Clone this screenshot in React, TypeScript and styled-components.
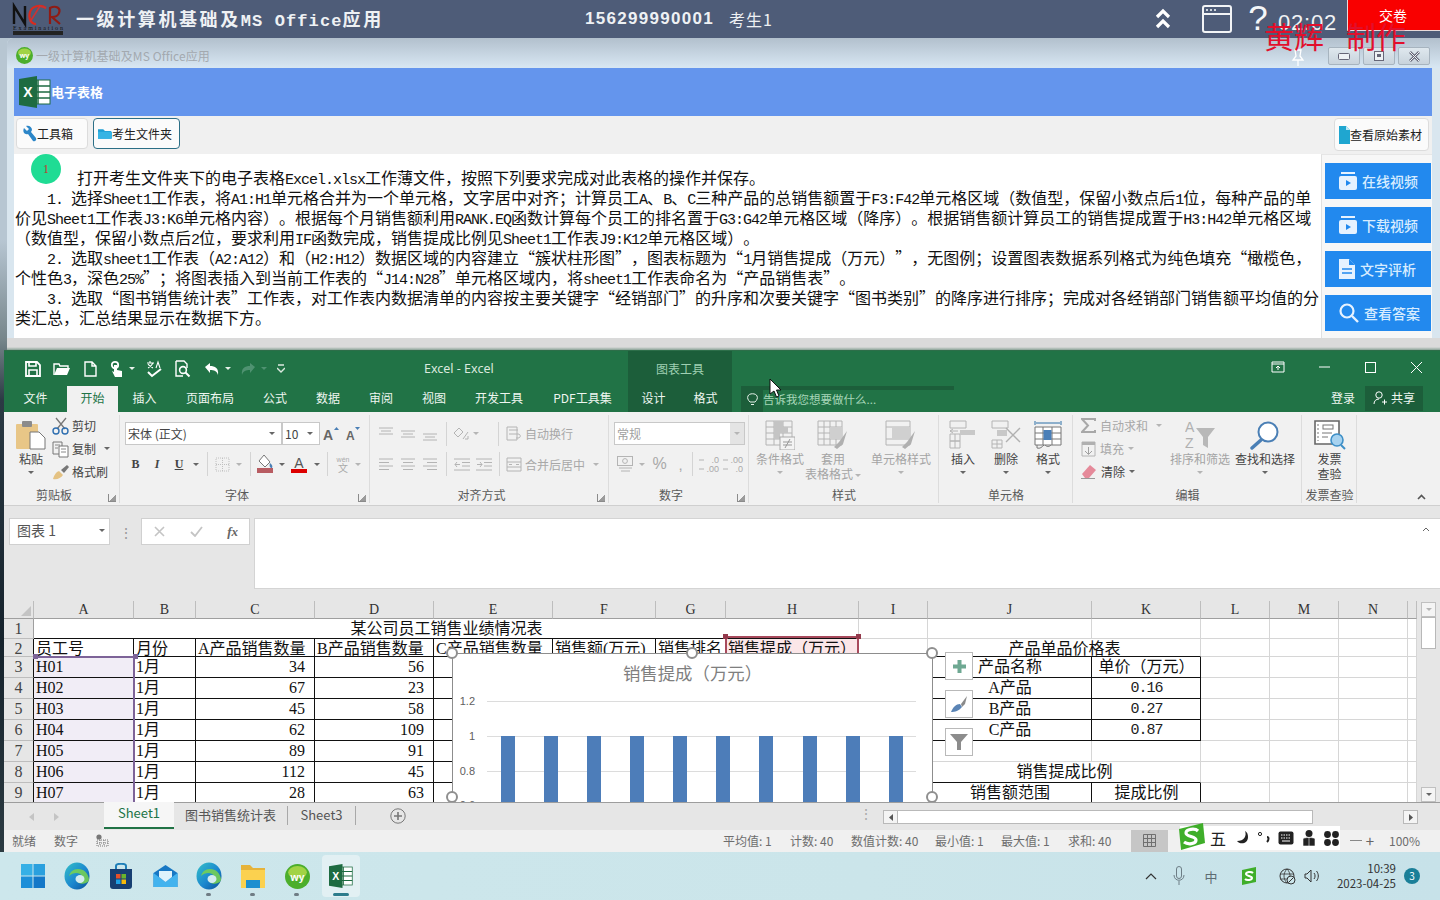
import React from "react";
import styled, { createGlobalStyle } from "styled-components";

const CJK = `"Noto Sans CJK SC", "Noto Sans", sans-serif`;
const SERIF = `"Liberation Serif", "Noto Sans CJK SC", serif`;
const MONO = `"Liberation Mono", monospace`;

const Global = createGlobalStyle`
  html, body { margin: 0; padding: 0; width: 1440px; height: 900px; overflow: hidden; }
  * { box-sizing: border-box; text-spacing-trim: space-all; }
  body { font-family: ${CJK}; }
  svg { display: block; flex: none; }
`;

const Page = styled.div`
  position: relative; width: 1440px; height: 900px; overflow: hidden; display: flex; flex-direction: column;
  background: linear-gradient(to bottom, #b7c6d2 0, #b7c6d2 240px, #75858a 340px, #2b3a44 400px, #15222c 640px, #2c3b42 852px);
`;

/* ---------- top bar ---------- */
const TopBar = styled.header`
  height: 38px; flex: none; display: flex; align-items: center; background: #4e5c78; color: #eef1f4;
`;
const LogoBox = styled.div` margin-left: 12px; width: 52px; `;
const ExamTitle = styled.div`
  margin-left: 12px; width: 320px; font-size: 18px; font-weight: 700; letter-spacing: 2.6px; white-space: pre; line-height: 38px; padding-top: 1px;
`;
const ExamLatin = styled.span` font-family: ${MONO}; font-size: 17px; letter-spacing: 1.1px; `;
const Phone = styled.div`
  margin-left: 189px; width: 130px; font: 700 17px "Liberation Sans", sans-serif; letter-spacing: 1.3px;
`;
const Candidate = styled.div` margin-left: 14px; font-size: 16px; letter-spacing: 1px; width: 46px; white-space: nowrap; `;
const TopRight = styled.div` margin-left: auto; display: flex; align-items: center; height: 38px; `;
const TopIcon = styled.div<{ $ml: number; $w: number }>`
  margin-left: ${p => p.$ml}px; width: ${p => p.$w}px; display: flex; justify-content: center; align-items: center;
`;
const HelpMark = styled.div` font: 400 35px "Liberation Sans", sans-serif; line-height: 38px; color: #f4f6f8; margin-top: -2px; `;
const Countdown = styled.div`
  margin-left: 9px; width: 60px; font: 400 22px "Liberation Sans", sans-serif; letter-spacing: 0.8px; margin-top: 8px; white-space: nowrap; color: #f0f2f4;
`;
const Submit = styled.button`
  margin-left: 9px; width: 93px; height: 31px; align-self: flex-start; border: 0; border-bottom: 1px solid #e8dada; border-left: 1px solid #e8dada;
  background: #f90000; color: #fff; font: 400 14px ${CJK}; padding: 0 2px 1px 0;
`;

/* ---------- exam window ---------- */
const ExamWindow = styled.section`
  height: 312px; flex: none; margin-left: 7px; display: flex; flex-direction: column; background: #d9e6ef; border-top-left-radius: 6px; overflow: hidden;
`;
const WinTitle = styled.div`
  height: 30px; flex: none; display: flex; align-items: center; padding: 5px 0 0 9px;
  background: linear-gradient(to bottom, #b2c0cd, #d8e7f3); color: #a3a9af; font-size: 12px; letter-spacing: 0.1px;
`;
const WinTitleText = styled.span` margin-left: 3px; `;
const PinBox = styled.div` margin-left: auto; margin-right: 22px; margin-top: 3px; `;
const WinBtns = styled.div` display: flex; gap: 3px; margin-right: 10px; margin-top: 1px; `;
const WinBtn = styled.div`
  width: 32px; height: 18px; border: 1px solid #a7b4bf; border-radius: 2px; background: linear-gradient(#dfe8ee, #c8d3dc);
  display: flex; align-items: center; justify-content: center;
`;
const Band = styled.div`
  height: 48px; flex: none; margin: 0 8px 0 7px; background: #6495ed; display: flex; align-items: center; padding-left: 5px; padding-bottom: 1px;
  color: #fff; font-size: 13px; font-weight: 700;
`;
const Tools = styled.div`
  height: 38px; flex: none; margin: 0 8px 0 7px; background: #f0f0f0; display: flex; align-items: flex-start; gap: 5px; padding: 2px 3px 0 2px;
`;
const ToolButton = styled.div<{ $w: number; $on?: boolean; $end?: boolean }>`
  width: ${p => p.$w}px; height: 31px; display: flex; align-items: center; gap: 0; padding-left: 4px; border-radius: 4px; background: #fbfbfb;
  border: 1px solid ${p => (p.$on ? "#2c6f86" : "#dcdcdc")}; font-size: 12px; color: #222; white-space: nowrap;
  ${p => p.$end && "margin-left: auto; height: 33px;"}
`;
const ContentRow = styled.div`
  height: 184px; flex: none; margin: 0 8px 0 7px; background: #fff; display: flex;
`;
const Desc = styled.div`
  position: relative; flex: 1; min-width: 0; padding: 13px 0 0 1px; font-size: 16px; line-height: 20px; color: #111; overflow: hidden;
`;
const Badge = styled.div`
  position: absolute; left: 17px; top: 0; width: 30px; height: 30px; border-radius: 50%; background: #1fdc94; color: #c0392b;
  font: 400 12px ${SERIF}; display: flex; align-items: center; justify-content: center;
`;
const DescLine = styled.div<{ $indent: number }>` padding-left: ${p => p.$indent}px; white-space: pre; height: 20px; `;
const Lat = styled.span` font-family: ${MONO}; font-size: 15px; letter-spacing: -1px; `;
const Side = styled.aside`
  width: 111px; flex: none; background: #f7f7f7; border-left: 1px solid #e0e0e0; border-top: 1px solid #e6e6e6;
  padding: 8px 1px 0 3px; display: flex; flex-direction: column; gap: 8px;
`;
const SideBtn = styled.div`
  height: 36px; background: #2289ee; color: #d7ecff; display: flex; align-items: center; gap: 5px; padding-left: 14px; font-size: 14px; white-space: nowrap; font-weight: 500;
`;
const WinFoot = styled.div`
  height: 12px; flex: none; background: linear-gradient(#dadada 0, #dadada 9px, #8aa397 12px);
`;

/* ---------- excel ---------- */
const Excel = styled.section`
  height: 502px; flex: none; margin-left: 4px; display: flex; flex-direction: column; background: #e6e6e6;
`;
const XlTitle = styled.div`
  height: 36px; flex: none; display: flex; background: #217346; color: #e8f2ea; border-top: 1px solid #2d6e49;
`;
const Qat = styled.div` width: 624px; flex: none; display: flex; align-items: center; `;
const QSlot = styled.div<{ $w: number; $ml?: number }>`
  width: ${p => p.$w}px; margin-left: ${p => p.$ml || 0}px; height: 22px; flex: none; display: flex; align-items: center; justify-content: center;
`;
const QCaret = styled.span<{ $dim?: boolean }>`
  width: 0; height: 0; border-left: 3px solid transparent; border-right: 3px solid transparent; border-top: 3px solid ${p => (p.$dim ? "#4f9271" : "#e8f2ea")};
`;
const XlName = styled.div` margin-left: 132px; font: 400 12.5px "Noto Sans", sans-serif; color: #dbe9df; `;
const ToolZone = styled.div<{ $tab?: boolean }>`
  width: 104px; flex: none; background: #1c5e3a; display: flex; align-items: center; ${p => !p.$tab && "justify-content: center; font-size: 12px; color: #9fd0b2;"}
`;
const WinCtl = styled.div` margin-left: auto; display: flex; margin-right: 1px; `;
const WinCtlSlot = styled.div` width: 46px; height: 32px; display: flex; align-items: center; justify-content: center; `;
const XlTabs = styled.div`
  height: 26px; flex: none; display: flex; background: #217346; color: #eef6f0; font-size: 12px;
`;
const XlTab = styled.div<{ $w: number; $on?: boolean }>`
  width: ${p => p.$w}px; flex: none; display: flex; align-items: center; justify-content: center; white-space: nowrap; padding-bottom: 3px; height: 26px;
  ${p => p.$on && "background: #f1f1f1; color: #217346;"}
`;
const TellMe = styled.div`
  margin-left: 9px; width: 213px; flex: none; position: relative; display: flex; align-items: center; color: #a6d6b8; font-size: 11.5px; gap: 5px; padding-left: 6px;
  background: linear-gradient(to right, #1c5e3a 0, #1c5e3a 22px, #217346 22px);
`;
const TellBar = styled.div`
  position: absolute; left: 22px; top: 0; right: 0; height: 4px; background: #1c5e3a;
`;
const Signin = styled.div` margin-left: auto; margin-right: 10px; display: flex; align-items: center; padding-bottom: 3px; `;
const Share = styled.div`
  width: 58px; height: 25px; background: #1c5e3a; margin-right: 17px; display: flex; align-items: center; justify-content: center; gap: 3px; font-size: 12px; padding-bottom: 2px;
`;

const Ribbon = styled.div`
  height: 94px; flex: none; display: flex; background: #f1f1f1; border-bottom: 1px solid #cfcfcf; color: #444; font-size: 12px;
`;
const Group = styled.div<{ $w: number; $end?: boolean }>`
  position: relative; width: ${p => p.$w}px; flex: none; display: flex; flex-direction: column;
  ${p => !p.$end && `&::after { content: ""; position: absolute; right: 0; top: 3px; bottom: 2px; width: 1px; background: #dcdcdc; }`}
`;
const GroupBody = styled.div<{ $pl?: number; $row?: boolean }>`
  flex: 1; min-height: 0; padding-left: ${p => p.$pl || 0}px; display: flex; ${p => (p.$row ? "flex-direction: row;" : "flex-direction: column; padding-top: 10px;")}
`;
const GroupLabel = styled.div<{ $pr?: number }>`
  height: 20px; flex: none; text-align: center; line-height: 20px; color: #5a5a5a; padding-right: ${p => p.$pr || 0}px; white-space: nowrap;
`;
const Launcher = styled.div`
  position: absolute; right: 4px; bottom: 3px; width: 8px; height: 8px; border-left: 1px solid #8b8b8b; border-bottom: 1px solid #8b8b8b;
  background: linear-gradient(135deg, transparent 55%, #9a9a9a 55%);
`;
const RowA = styled.div` height: 23px; display: flex; align-items: center; flex: none; `;
const RowB = styled.div` height: 26px; margin-top: 6px; display: flex; align-items: center; flex: none; `;
const Slot = styled.div<{ $w: number; $dim?: boolean }>`
  width: ${p => p.$w}px; height: 22px; flex: none; display: flex; align-items: center; justify-content: center; color: ${p => (p.$dim ? "#a8a8a8" : "#444")}; white-space: nowrap;
`;
const Sep = styled.div<{ $w: number }>`
  width: ${p => p.$w}px; height: 24px; flex: none; display: flex; justify-content: center;
  &::after { content: ""; width: 1px; height: 100%; background: #d4d4d4; }
`;
const Caret = styled.span<{ $dim?: boolean; $ml?: number }>`
  display: inline-block; width: 0; height: 0; flex: none; margin-left: ${p => p.$ml || 0}px; border-left: 3px solid transparent; border-right: 3px solid transparent;
  border-top: 3px solid ${p => (p.$dim ? "#b5b5b5" : "#666")}; vertical-align: middle;
`;
const Combo = styled.div<{ $w: number; $dim?: boolean }>`
  width: ${p => p.$w}px; height: 23px; flex: none; background: #fff; border: 1px solid #c8c8c8; display: flex; align-items: center; padding: 0 6px 0 2px;
  justify-content: space-between; color: ${p => (p.$dim ? "#a0a0a0" : "#444")};
`;
const ComboEnd = styled.div` align-self: stretch; width: 14px; margin-right: -6px; background: #e4e4e4; display: flex; align-items: center; justify-content: center; `;
const Bold = styled.span<{ $kind?: "b" | "i" | "u" }>`
  font: ${p => (p.$kind === "i" ? "italic 700" : "700")} 12px "Liberation Serif", serif; ${p => p.$kind === "u" && "text-decoration: underline;"}
`;
const SmallGlyph = styled.span<{ $size?: number }>` font: 400 ${p => p.$size || 13}px "Liberation Sans", sans-serif; `;
const SmallCol = styled.div<{ $ml?: number }>` display: flex; flex-direction: column; padding-top: 2px; margin-left: ${p => p.$ml || 0}px; `;
const SmallRow = styled.div<{ $w?: number; $dim?: boolean; $gap?: number }>`
  height: 23px; display: flex; align-items: center; gap: ${p => p.$gap || 2}px; white-space: nowrap; ${p => p.$w && `width: ${p.$w}px;`} color: ${p => (p.$dim ? "#a8a8a8" : "#444")};
`;
const BigBtn = styled.div<{ $w: number; $ml?: number; $dim?: boolean }>`
  width: ${p => p.$w}px; margin-left: ${p => p.$ml || 0}px; flex: none; display: flex; flex-direction: column; align-items: center; padding-top: 6px;
  color: ${p => (p.$dim ? "#a4a4a4" : "#444")}; line-height: 15px; white-space: nowrap; text-align: center;
`;
const BigIcon = styled.div` height: 33px; display: flex; align-items: center; justify-content: center; `;
const BigCaret = styled.div` height: 12px; display: flex; align-items: center; `;
const CollapseSlot = styled.div` flex: 1; display: flex; align-items: flex-end; justify-content: flex-end; padding: 0 14px 5px 0; `;

const FormulaBar = styled.div`
  height: 95px; flex: none; display: flex; align-items: flex-start; padding-top: 12px; background: #e6e6e6;
`;
const NameBox = styled.div`
  margin-left: 5px; width: 101px; height: 27px; background: #fff; border: 1px solid #d0d0d0; display: flex; align-items: center; justify-content: space-between;
  padding: 0 4px 3px 7px; font-size: 14px; color: #555;
`;
const Dots = styled.div` width: 31px; height: 27px; display: flex; align-items: center; justify-content: center; color: #999; font-size: 14px; line-height: 8px; `;
const FxBox = styled.div`
  width: 109px; height: 27px; background: #fff; border: 1px solid #d0d0d0; display: flex; align-items: center; justify-content: space-between; padding: 0 11px 0 12px;
`;
const Fx = styled.span` font: italic 700 13px "Liberation Serif", serif; color: #666; `;
const FormulaInput = styled.div`
  margin-left: 4px; flex: 1; height: 71px; background: #fff; border: 1px solid #d4d4d4; border-right: 0; display: flex; justify-content: flex-end; padding: 8px 10px 0 0;
`;

const SheetRow = styled.div` height: 201px; flex: none; display: flex; background: #e6e6e6; `;
const SheetWrap = styled.div` position: relative; width: 1413px; flex: none; height: 201px; overflow: hidden; background: #fff; `;
const Grid = styled.div`
  display: grid;
  grid-template-columns: 30px 100px 62px 119px 119px 119px 103px 70px 133px 69px 164px 109px 69px 69px 69px 9px;
  grid-template-rows: 18px 20px 18px repeat(7, 21px);
  font: 400 16px ${SERIF}; color: #111;
`;
const Corner = styled.div`
  background: #e6e6e6; border-right: 1px solid #bdbdbd; border-bottom: 1px solid #9f9f9f; display: flex; align-items: flex-end; justify-content: flex-end; padding: 0 2px 2px 0;
`;
const ColHead = styled.div`
  background: #e6e6e6; border-right: 1px solid #bdbdbd; border-bottom: 1px solid #9f9f9f; text-align: center; font: 400 14px ${SERIF}; line-height: 18px; color: #333;
`;
const RowHead = styled.div<{ $black?: boolean }>`
  background: #e6e6e6; border-right: 1px solid ${p => (p.$black ? "#111" : "#9f9f9f")}; border-bottom: 1px solid #bdbdbd; text-align: center; color: #444;
  font: 400 16px/19px "Liberation Serif", serif;
`;
const Cell = styled.div<{ $span?: number; $align?: string; $rb?: boolean; $bb?: boolean; $tint?: string; $mono?: boolean; $pr?: number }>`
  grid-column: span ${p => p.$span || 1}; overflow: hidden; white-space: nowrap; line-height: 20px; padding: 0 ${p => p.$pr ?? 1}px 0 2px;
  text-align: ${p => p.$align || "left"}; background: ${p => p.$tint || "#fff"};
  border-right: 1px solid ${p => (p.$rb ? "#111" : "#d6d6d6")}; border-bottom: 1px solid ${p => (p.$bb ? "#111" : "#d6d6d6")};
  ${p => p.$mono && `font-family: ${MONO}; font-size: 15px; letter-spacing: -1px; color: #222; line-height: 22px;`}
`;
const SelBox = styled.div<{ $x: number; $y: number; $w: number; $h: number; $c: string }>`
  position: absolute; left: ${p => p.$x}px; top: ${p => p.$y}px; width: ${p => p.$w}px; height: ${p => p.$h}px; border: 2px solid ${p => p.$c}; border-bottom: 0;
`;
const SelLeftless = styled(SelBox)` border-left: 0; `;
const SelDot = styled.div<{ $x: number; $y: number; $c: string }>`
  position: absolute; left: ${p => p.$x}px; top: ${p => p.$y}px; width: 5px; height: 5px; background: ${p => p.$c};
`;
const Chart = styled.div`
  position: absolute; left: 448px; top: 52px; width: 481px; height: 288px; background: #fff; border: 1px solid #8d8d8d;
`;
const ChartTitle = styled.div`
  height: 43px; text-align: center; font: 400 17.4px ${CJK}; color: #7f7f7f; line-height: 38px;
`;
const Handle = styled.div<{ $x: number; $y: number }>`
  position: absolute; left: ${p => p.$x - 6}px; top: ${p => p.$y - 6}px; width: 12px; height: 12px; border-radius: 50%; background: #fff; border: 2px solid #8f8f8f;
`;
const ChartTools = styled.div` position: absolute; left: 941px; top: 51px; display: flex; flex-direction: column; gap: 10px; `;
const ChartTool = styled.div`
  width: 28px; height: 28px; background: #fff; border: 1px solid #b9b9b9; display: flex; align-items: center; justify-content: center;
`;
const VScroll = styled.div` flex: 1; display: flex; flex-direction: column; align-items: flex-start; padding-left: 4px; `;
const VBtn = styled.div`
  width: 15px; height: 15px; margin-top: 1px; background: #f4f4f4; border: 1px solid #c0c0c0; display: flex; align-items: center; justify-content: center; flex: none;
`;
const VThumb = styled.div` width: 15px; height: 32px; background: #fff; border: 1px solid #b8b8b8; flex: none; `;
const VSpace = styled.div` flex: 1; `;

const TabBar = styled.div`
  height: 28px; flex: none; display: flex; background: #e6e6e6; border-top: 1px solid #9d9d9d; font-size: 13px; color: #555;
`;
const TabNav = styled.div` width: 100px; flex: none; display: flex; align-items: center; padding-left: 25px; gap: 20px; color: #bbb; `;
const SheetTab = styled.div<{ $w: number; $on?: boolean }>`
  width: ${p => p.$w}px; flex: none; display: flex; align-items: center; justify-content: center; white-space: nowrap;
  ${p => (p.$on ? "background: #f6f6f6; color: #217346; border-bottom: 2px solid #217346; margin-top: -1px; height: 27px; padding-bottom: 4px;" : "border-right: 1px solid #a8a8a8; height: 19px; margin-top: 3px; padding-bottom: 2px;")}
`;
const PlusSlot = styled.div` margin-left: 30px; width: 24px; height: 26px; display: flex; align-items: center; justify-content: center; `;
const TabSpacer = styled.div` flex: 1; `;
const TabDots = styled.div` width: 34px; flex: none; text-align: center; color: #aaa; font-size: 14px; line-height: 8px; padding-top: 6px; white-space: pre; `;
const HScroll = styled.div` width: 535px; flex: none; margin-right: 22px; margin-top: 7px; height: 14px; display: flex; `;
const HBtn = styled.div` width: 15px; height: 14px; background: #f4f4f4; border: 1px solid #b9b9b9; display: flex; align-items: center; justify-content: center; `;
const HThumb = styled.div` width: 415px; background: #fff; border: 1px solid #b9b9b9; border-left: 0; `;
const HTrack = styled.div` flex: 1; `;

const Status = styled.div`
  height: 23px; flex: none; display: flex; align-items: center; background: #f0f0f0; border-bottom: 1px solid #2f5d46; font-size: 12px; color: #6d6d6d; white-space: nowrap; padding-bottom: 1px;
`;
const StatusLeft = styled.div` width: 719px; flex: none; display: flex; align-items: center; padding-left: 8px; gap: 18px; `;
const StatusItem = styled.div<{ $w: number }>` width: ${p => p.$w}px; flex: none; `;
const GridView = styled.div`
  width: 37px; height: 22px; flex: none; background: #c6c6c6; display: flex; align-items: center; justify-content: center;
`;
const Slider = styled.div` margin-left: 182px; width: 12px; height: 1px; background: #888; `;
const PlusMark = styled.div` margin-left: 1px; width: 14px; text-align: center; font-size: 15px; color: #666; line-height: 20px; `;
const Zoom = styled.div` margin-left: 12px; `;
const Ime = styled.div`
  position: absolute; left: 1180px; top: 826px; width: 160px; height: 24px; background: #fff; display: flex; align-items: center; padding-left: 29px; color: #222; gap: 8px;
`;
const ImeS = styled.div` position: absolute; left: -3px; top: -3px; `;
const ImeGlyph = styled.span` font: 400 16px ${CJK}; width: 18px; text-align: center; `;

/* ---------- taskbar ---------- */
const Taskbar = styled.footer`
  height: 48px; flex: none; display: flex; align-items: center; background: linear-gradient(to right, #cde7ec, #cbe5ea 60%, #c7e2e9); padding-left: 11px; padding-right: 20px;
`;
const TaskSlot = styled.div<{ $on?: boolean; $open?: boolean }>`
  position: relative; width: 44px; height: 42px; flex: none; display: flex; align-items: center; justify-content: center; border-radius: 4px;
  ${p => p.$on && "background: #e2f0f3; width: 38px; margin: 0 3px;"}
  ${p => p.$open && `&::after { content: ""; position: absolute; left: ${p.$on ? "11px" : "19px"}; bottom: 1px; height: 3px; width: ${p.$on ? "16px" : "5px"}; border-radius: 2px; background: ${p.$on ? "#2d7c8c" : "#6f7c84"}; }`}
`;
const Tray = styled.div` margin-left: auto; display: flex; align-items: center; color: #333; `;
const TrayItem = styled.div<{ $w: number; $ml?: number }>`
  width: ${p => p.$w}px; margin-left: ${p => p.$ml || 0}px; height: 24px; flex: none; display: flex; align-items: center; justify-content: center;
`;
const TrayChar = styled.span` font-size: 13px; color: #5d6c72; `;
const Clock = styled.div`
  margin-left: 5px; width: 70px; text-align: right; font-size: 11.5px; line-height: 15px; color: #333;
`;
const Notif = styled.div`
  margin-left: 8px; width: 16px; height: 16px; border-radius: 50%; background: #1a7f98; color: #fff; font-size: 10px; text-align: center; line-height: 16px;
`;

/* ---------- overlays ---------- */
const Watermark = styled.div`
  position: absolute; left: 1264px; top: 15px; display: flex; gap: 22px; font: 400 30px ${CJK}; color: #e20f2c; line-height: 40px; white-space: nowrap; pointer-events: none;
`;
const Cursor = styled.div` position: absolute; left: 769px; top: 378px; `;

/* ---------- helpers ---------- */
const Mixed: React.FC<{ text: string }> = ({ text }) => (
  <>{text.split(/([\x20-\x7e]+)/).map((p, i) => (i % 2 ? <Lat key={i}>{p}</Lat> : p))}</>
);

const Logo = () => (
  <svg width={52} height={34} viewBox="0 0 52 34">
    <path d="M2 22V4l11 18V4" stroke="#111" strokeWidth={2.4} fill="none" />
    <path d="M34 6c-6-4-14-2-16 4s1 12 6 12" stroke="#d92b1e" strokeWidth={2.2} fill="none" />
    <path d="M18 20L28 4l6 2" stroke="#c33" strokeWidth={1.6} fill="none" />
    <path d="M38 22V6c6-3 11 0 9 5-1 3-4 4-7 4l8 7" stroke="#8f1b14" strokeWidth={2.2} fill="none" />
    <text x={1} y={28} fontSize={6} fontFamily="Liberation Serif" fill="#111" textLength={50}>Examination</text>
    <rect x={1} y={29} width={50} height={4} fill="#222" />
  </svg>
);
const Chevrons = () => (
  <svg width={16} height={26} viewBox="0 0 16 26"><path d="M2 11l6-6 6 6M2 21l6-6 6 6" stroke="#fff" strokeWidth={3.2} fill="none" /></svg>
);
const WinIcon = () => (
  <svg width={30} height={28} viewBox="0 0 30 28">
    <rect x={1} y={1} width={28} height={26} rx={2} fill="#4e5c78" stroke="#f2f4f6" strokeWidth={2} />
    <path d="M1 9h28" stroke="#f2f4f6" strokeWidth={2} />
    <path d="M4 5h2M8 5h2M12 5h2" stroke="#cfd6dd" strokeWidth={2} />
  </svg>
);
const WyBall: React.FC<{ s: number }> = ({ s }) => (
  <svg width={s} height={s} viewBox="0 0 24 24">
    <circle cx={12} cy={12} r={12} fill="#4cae2c" /><ellipse cx={12} cy={8} rx={9} ry={6} fill="#b6dc4c" opacity={0.8} />
    <text x={12} y={16} fontSize={10} fontWeight={700} textAnchor="middle" fill="#fff" fontFamily="Liberation Sans">wy</text>
  </svg>
);
const ExcelLogo: React.FC<{ w: number; h: number }> = ({ w, h }) => (
  <svg width={w} height={h} viewBox="0 0 32 32">
    <rect x={12} y={4} width={19} height={24} fill="#fff" stroke="#1e6b41" />
    <path d="M19 4v24M12 10h19M12 16h19M12 22h19" stroke="#1e6b41" strokeWidth={1.5} />
    <path d="M0 3l18-3v32L0 29z" fill="#1e6b41" />
    <text x={9} y={21} fontSize={14} fontWeight={700} textAnchor="middle" fill="#fff" fontFamily="Liberation Sans">X</text>
  </svg>
);
const Wrench = () => (
  <svg width={16} height={18} viewBox="0 0 16 18"><path d="M3 3l3 3 2-2-3-3c3-1 6 1 6 4l-1 2 5 6c1 2-1 4-3 3L7 9C4 10 1 7 3 3z" fill="#2c86c8" /></svg>
);
const Folder = () => (
  <svg width={14} height={13} viewBox="0 0 16 14"><path d="M0 2h6l2 2h7v9H0z" fill="#1f9fd4" /><path d="M0 5h16v8H0z" fill="#37b4e4" /></svg>
);
const DocBlue = () => (
  <svg width={11} height={18} viewBox="0 0 11 18"><path d="M0 0h7l4 4v14H0z" fill="#1fa6d0" /><path d="M7 0l4 4H7z" fill="#bfe9f5" /></svg>
);
const Pin = () => (
  <svg width={16} height={17} viewBox="0 0 16 17"><path d="M5 1h6l-1 6 3 4H3l3-4zM8 11v6" stroke="#fff" strokeWidth={1.3} fill="none" /></svg>
);
const VideoIcon = () => (
  <svg width={18} height={18} viewBox="0 0 18 18"><rect x={2} y={0} width={14} height={2} fill="#e6f2ff" /><rect x={0} y={4} width={18} height={14} rx={2} fill="#e6f2ff" /><path d="M7 8l5 3-5 3z" fill="#2289ee" /></svg>
);
const FileIcon = () => (
  <svg width={16} height={20} viewBox="0 0 16 20"><path d="M0 0h10l6 6v14H0z" fill="#e6f2ff" /><path d="M3 10h10M3 14h10" stroke="#2289ee" strokeWidth={1.6} /><path d="M10 0v6h6" fill="#2289ee" /></svg>
);
const SearchIcon = () => (
  <svg width={20} height={20} viewBox="0 0 20 20"><circle cx={8} cy={8} r={6.5} stroke="#e6f2ff" strokeWidth={2.2} fill="none" /><path d="M13 13l6 6" stroke="#e6f2ff" strokeWidth={2.4} /></svg>
);

const w = { stroke: "#fff", strokeWidth: 1.4, fill: "none" };
const Q = {
  save: <svg width={16} height={16} viewBox="0 0 16 16"><path d="M1 1h11l3 3v11H1z" {...w} strokeWidth={1.8} /><path d="M4 1v4h7V1M4 15V9h8v6" {...w} strokeWidth={1.6} /></svg>,
  open: <svg width={18} height={14} viewBox="0 0 18 14"><path d="M1 13V2h5l1 2h8v2" {...w} /><path d="M1 13l3-7h13l-3 7z" fill="#fff" /></svg>,
  doc: <svg width={13} height={16} viewBox="0 0 13 16"><path d="M1 1h7l4 4v10H1zM8 1v4h4" {...w} /></svg>,
  touch: <svg width={14} height={18} viewBox="0 0 14 18"><circle cx={6} cy={5} r={3.2} {...w} strokeWidth={1.8} /><path d="M5 5v7l-2-1 3 6h7v-6l-5-1V5z" fill="#fff" /></svg>,
  spell: <svg width={18} height={18} viewBox="0 0 18 18"><path d="M2 3h7M5 1v2M3 8c2-1 4-3 5-5M3 4c1 2 3 3 5 4M11 8l2-6 2 6" {...w} strokeWidth={1.1} /><path d="M3 12l4 4 9-7" {...w} strokeWidth={2} /></svg>,
  prev: <svg width={16} height={18} viewBox="0 0 16 18"><path d="M1 1h8l3 3v4M1 1v15h7" {...w} /><circle cx={8} cy={10} r={3.4} {...w} strokeWidth={1.6} /><path d="M10.5 12.5l4 4" {...w} strokeWidth={2} /></svg>,
  undo: <svg width={16} height={14} viewBox="0 0 16 14"><path d="M1 5l5-4v3c5 0 9 2 8 9-1-4-4-5-8-5v3z" fill="#fff" /></svg>,
  redo: <svg width={16} height={14} viewBox="0 0 16 14"><path d="M15 5l-5-4v3C5 4 1 6 2 13c1-4 4-5 8-5v3z" fill="#4f9271" /></svg>,
  cust: <svg width={8} height={9} viewBox="0 0 8 9"><path d="M1 1h6M0 4l4 4 4-4" stroke="#dbe9df" strokeWidth={1.4} fill="none" /></svg>,
};
const Cell16 = ({ children }: { children: React.ReactNode }) => <svg width={18} height={18} viewBox="0 0 18 18" fill="none">{children}</svg>;
const gl = { stroke: "#b4b4b4", strokeWidth: 1, fill: "none" };
const I = {
  paste: <svg width={30} height={30} viewBox="0 0 30 30"><rect x={0} y={4} width={22} height={25} rx={1} fill="#e8c687" /><rect x={6} y={1} width={10} height={6} rx={1} fill="#8b8b8b" /><path d="M14 12h9l6 6v11H14z" fill="#fff" stroke="#777" /></svg>,
  cut: <Cell16><path d="M4 1l9 11M14 1L5 12" stroke="#777" strokeWidth={1.3} /><circle cx={4} cy={14} r={3} stroke="#2f6fb0" strokeWidth={1.4} /><circle cx={13} cy={14} r={3} stroke="#2f6fb0" strokeWidth={1.4} /></Cell16>,
  copy: <Cell16><path d="M1 2h9v12H1z" stroke="#777" /><path d="M7 6h9v11H7z" stroke="#777" fill="#fff" /><path d="M3 5h5M3 8h3M9 9h5M9 12h5" stroke="#888" /></Cell16>,
  brush: <Cell16><path d="M9 7l6-5 2 2-5 6z" fill="#777" /><path d="M1 16c1-4 3-7 6-8l4 4c-2 3-6 5-10 4z" fill="#e4c283" /></Cell16>,
  aUp: <svg width={16} height={14} viewBox="0 0 16 14"><text x={0} y={13} fontSize={14} fontWeight={700} fill="#666" fontFamily="Liberation Sans">A</text><path d="M11 3l2.5-3 2.5 3z" fill="#4a7fb5" /></svg>,
  aDn: <svg width={16} height={14} viewBox="0 0 16 14"><text x={1} y={13} fontSize={12} fontWeight={700} fill="#666" fontFamily="Liberation Sans">A</text><path d="M10 0l2.5 3L15 0z" fill="#4a7fb5" /></svg>,
  border: <svg width={15} height={15} viewBox="0 0 15 15"><path d="M1 1h13v13H1zM7.5 1v13M1 7.5h13" stroke="#c0c0c0" strokeDasharray="1 1" fill="none" /></svg>,
  fill: <svg width={17} height={18} viewBox="0 0 17 18"><path d="M7 0l6 7-5 5-6-6z" stroke="#777" fill="#fff" /><path d="M13 8c2 2 3 3 2 5-2 0-3-2-2-5z" fill="#4a7fb5" /><rect y={13} width={16} height={5} fill="#b85c62" /></svg>,
  fontA: <svg width={17} height={18} viewBox="0 0 17 18"><text x={8} y={13} fontSize={14} fontWeight={500} fill="#555" textAnchor="middle" fontFamily="Liberation Sans">A</text><rect y={14} width={16} height={4} fill="#d00" /></svg>,
  wen: <svg width={16} height={18} viewBox="0 0 16 18"><text x={8} y={7} fontSize={7} fill="#aaa" textAnchor="middle" fontFamily="Liberation Sans">wén</text><text x={8} y={17} fontSize={10} fill="#aaa" textAnchor="middle" fontFamily="Noto Sans CJK SC">文</text></svg>,
  alignV: (y: number) => <svg width={14} height={14} viewBox="0 0 14 14"><path d={`M0 ${y}h14M2 ${y + 3}h10M0 ${y + 6}h14`} {...gl} /></svg>,
  alignH: (t: number) => <svg width={14} height={13} viewBox="0 0 14 13"><path d={`M0 1h14M${t === 0 ? 0 : t === 1 ? 2 : 4} 4.5h10M0 8h14M${t === 0 ? 0 : t === 1 ? 2 : 4} 11.5h10`} {...gl} /></svg>,
  orient: <svg width={16} height={14} viewBox="0 0 16 14"><path d="M1 6l5-5 4 4-5 5zM10 12l5-7M12 12h3V9" {...gl} /></svg>,
  indent: (r: boolean) => <svg width={16} height={13} viewBox="0 0 16 13"><path d="M0 1h16M8 4.5h8M8 8h8M0 12h16" {...gl} /><path d={r ? "M1 6.5h5M4 4l2 2.5L4 9" : "M6 6.5H1M3 4L1 6.5 3 9"} {...gl} /></svg>,
  wrap: <svg width={16} height={15} viewBox="0 0 16 15"><path d="M1 1h10v13H1zM3 4h9M3 8h9c3 0 3 4 0 4h-2" {...gl} /></svg>,
  merge: <svg width={16} height={15} viewBox="0 0 16 15"><path d="M1 1h14v13H1zM1 5h14M1 10h14M3 7.5h3M13 7.5h-3" {...gl} /></svg>,
  money: <svg width={17} height={16} viewBox="0 0 17 16"><rect x={0.5} y={0.5} width={15} height={9} {...gl} /><circle cx={8} cy={5} r={2.4} {...gl} /><path d="M2 12h13M4 15h9" {...gl} /></svg>,
  dec: (a: string, b: string) => <svg width={22} height={17} viewBox="0 0 22 17"><text x={21} y={7} fontSize={9} fill="#aaa" textAnchor="end" fontFamily="Liberation Sans">{a}</text><text x={21} y={16} fontSize={9} fill="#aaa" textAnchor="end" fontFamily="Liberation Sans">{b}</text><path d="M1 4h5M1 13h5" {...gl} /></svg>,
  cond: <svg width={30} height={30} viewBox="0 0 30 30"><path d="M1 1h26v24H1zM9 1v24M18 1v24M1 7h26M1 13h26M1 19h26" {...gl} /><path d="M9 1h9v6h5v6h-8v6H9z" fill="#c4c4c4" /><rect x={15} y={17} width={15} height={13} fill="#f4f4f4" stroke="#aaa" /><path d="M18 22h9M18 25h9M25 19l-5 9" stroke="#999" /></svg>,
  table: <svg width={32} height={30} viewBox="0 0 32 30"><path d="M1 1h24v24H1zM7 1v24M13 1v24M19 1v24M1 7h24M1 13h24M1 19h24" {...gl} /><rect x={13} y={7} width={12} height={12} fill="#cfcfcf" /><path d="M17 27l5-5 8-11-4 13-6 5z" fill="#b0b0b0" /></svg>,
  cellS: <svg width={32} height={30} viewBox="0 0 32 30"><path d="M1 1h24v24H1zM1 7h24M1 19h24" {...gl} /><rect x={7} y={7} width={18} height={12} fill="#d0d0d0" /><path d="M17 27l5-5 8-11-4 13-6 5z" fill="#b0b0b0" /></svg>,
  insert: <svg width={28} height={30} viewBox="0 0 28 30"><path d="M1 1h16v7H1zM1 14h10v7H1zM1 21h10v7H1zM6 14v14" {...gl} /><rect x={11} y={10} width={15} height={5} fill="#c8c8c8" /><path d="M1 11h8M4 9l-3 2 3 2" {...gl} /></svg>,
  del: <svg width={30} height={30} viewBox="0 0 30 30"><path d="M1 1h16v7H1zM1 20h10v8H1zM6 20v8M1 24h10" {...gl} /><rect x={6} y={10} width={10} height={6} fill="#c8c8c8" /><path d="M15 8l14 14M29 8L15 22" stroke="#b0b0b0" strokeWidth={1.4} /></svg>,
  format: <svg width={28} height={30} viewBox="0 0 28 30"><path d="M1 1v4M27 1v4M2 3h24" stroke="#2b6ea6" fill="none" /><rect x={1} y={7} width={26} height={18} fill="#fff" /><path d="M1 7h26v18H1zM9 7v18M18 7v18M1 13h26M1 19h26" stroke="#777" fill="none" /><rect x={9.5} y={10} width={8} height={10} fill="#4a7fb8" /><path d="M3 25v3c3 1 5-1 7-3M11 25c2 2 4 2 6 0" stroke="#777" fill="none" /></svg>,
  sigma: <svg width={15} height={15} viewBox="0 0 15 15"><path d="M14 3V1H1l6 6.5L1 14h13v-2" stroke="#a8a8a8" strokeWidth={2} fill="none" /></svg>,
  fillDn: <svg width={15} height={16} viewBox="0 0 15 16"><path d="M1 1h13v14H1z" {...gl} /><path d="M1 1h13v3H1z" fill="#b0b0b0" /><path d="M7.5 6v7M4 10l3.5 3.5L11 10" stroke="#a0a0a0" fill="none" /></svg>,
  eraser: <svg width={16} height={14} viewBox="0 0 16 14"><path d="M9 0l6 5-7 8H4L1 9z" fill="#e58a9a" /><path d="M0 13.5h14" stroke="#999" /></svg>,
  sort: <svg width={30} height={30} viewBox="0 0 30 30"><text x={0} y={12} fontSize={14} fill="#b0b0b0" fontFamily="Liberation Sans">A</text><text x={0} y={28} fontSize={14} fill="#b0b0b0" fontFamily="Liberation Sans">Z</text><path d="M11 8h19l-7 9v11l-5-3v-8z" fill="#b8b8b8" /></svg>,
  find: <svg width={30} height={30} viewBox="0 0 30 30"><circle cx={18} cy={12} r={9.5} stroke="#4a7fb5" strokeWidth={2} fill="#fff" /><path d="M11 20L2 28" stroke="#4a7fb5" strokeWidth={3.4} strokeLinecap="round" /></svg>,
  invoice: <svg width={32} height={30} viewBox="0 0 32 30"><path d="M1 1h24v23H1z" stroke="#666" strokeWidth={1.6} fill="#fff" /><path d="M4 4v17" stroke="#777" strokeDasharray="2 2" /><rect x={9} y={5} width={10} height={4} stroke="#777" fill="none" /><path d="M8 13h10M8 17h6" stroke="#777" /><circle cx={23} cy={20} r={6} fill="#a7d2ef" stroke="#3d8fc7" strokeWidth={1.6} /><path d="M27 25l4 4" stroke="#3d8fc7" strokeWidth={2} /></svg>,
};

const columns = ["A", "B", "C", "D", "E", "F", "G", "H", "I", "J", "K", "L", "M", "N", ""];
type C = { t?: string; span?: number; align?: string; rb?: boolean; bb?: boolean; tint?: string; mono?: boolean; pr?: number };
const blanks = (n: number): C[] => Array.from({ length: n }, () => ({}));
const blk = (t: string, extra: Partial<C> = {}): C => ({ t, rb: true, bb: true, ...extra });
const purple = "#f1edf6";
const dataRows: [string, string, string, string][] = [
  ["H01", "1月", "34", "56"], ["H02", "1月", "67", "23"], ["H03", "1月", "45", "58"], ["H04", "1月", "62", "109"],
  ["H05", "1月", "89", "91"], ["H06", "1月", "112", "45"], ["H07", "1月", "28", "63"],
];
const rightSide: C[][] = [
  [blk("产品名称", { align: "center" }), blk("单价（万元）", { align: "center" })],
  [blk("A产品", { align: "center" }), blk("0.16", { align: "center", mono: true })],
  [blk("B产品", { align: "center" }), blk("0.27", { align: "center", mono: true })],
  [blk("C产品", { align: "center" }), blk("0.87", { align: "center", mono: true })],
  [{}, {}],
  [{ t: "销售提成比例", span: 2, align: "center", bb: true }],
  [blk("销售额范围", { align: "center" }), blk("提成比例", { align: "center" })],
];
const sheet: C[][] = [
  [{ t: "某公司员工销售业绩情况表", span: 8, align: "center", bb: true }, ...blanks(7)],
  [
    blk("员工号"), blk("月份"), blk("A产品销售数量"), blk("B产品销售数量"), blk("C产品销售数量"), blk("销售额(万元)"), blk("销售排名"),
    blk("销售提成（万元）", { tint: "#fbe6e8" }), {}, { t: "产品单品价格表", span: 2, align: "center", bb: true }, ...blanks(4),
  ],
  ...dataRows.map((r, i) => [
    blk(r[0], { tint: purple }), blk(r[1]), blk(r[2], { align: "right", pr: 9 }), blk(r[3], { align: "right", pr: 9 }), blk(""), blk(""), blk(""), blk(""), {},
    ...rightSide[i], ...blanks(4),
  ]),
];

const bars = [49, 92, 135, 178, 221, 264, 307, 351, 394, 437];
const gridYs = [{ y: 4, l: "1.2" }, { y: 39, l: "1" }, { y: 74, l: "0.8" }, { y: 108, l: "0.6" }];
const lines = [
  { i: 62, t: "打开考生文件夹下的电子表格Excel.xlsx工作薄文件，按照下列要求完成对此表格的操作并保存。" },
  { i: 32, t: "1. 选择Sheet1工作表，将A1:H1单元格合并为一个单元格，文字居中对齐；计算员工A、B、C三种产品的总销售额置于F3:F42单元格区域（数值型，保留小数点后1位，每种产品的单" },
  { i: 0, t: "价见Sheet1工作表J3:K6单元格内容）。根据每个月销售额利用RANK.EQ函数计算每个员工的排名置于G3:G42单元格区域（降序）。根据销售额计算员工的销售提成置于H3:H42单元格区域" },
  { i: 0, t: "（数值型，保留小数点后2位，要求利用IF函数完成，销售提成比例见Sheet1工作表J9:K12单元格区域）。" },
  { i: 32, t: "2. 选取sheet1工作表（A2:A12）和（H2:H12）数据区域的内容建立“簇状柱形图”，图表标题为“1月销售提成（万元）”，无图例；设置图表数据系列格式为纯色填充“橄榄色，" },
  { i: 0, t: "个性色3，深色25%”；将图表插入到当前工作表的“J14:N28”单元格区域内，将sheet1工作表命名为“产品销售表”。" },
  { i: 32, t: "3. 选取“图书销售统计表”工作表，对工作表内数据清单的内容按主要关键字“经销部门”的升序和次要关键字“图书类别”的降序进行排序；完成对各经销部门销售额平均值的分" },
  { i: 0, t: "类汇总，汇总结果显示在数据下方。" },
];
const xlTabs: [string, number, boolean?][] = [
  ["文件", 63], ["开始", 51, true], ["插入", 53], ["页面布局", 78], ["公式", 52], ["数据", 54], ["审阅", 52], ["视图", 54], ["开发工具", 76], ["PDF工具集", 91],
];

const Edge: React.FC<{ id: string }> = ({ id }) => (
  <svg width={26} height={28} viewBox="0 0 26 28">
    <defs><linearGradient id={id} x1="0" y1="0" x2="1" y2="1"><stop offset="0" stopColor="#35c1c8" /><stop offset=".55" stopColor="#1b87cf" /><stop offset="1" stopColor="#0c4f96" /></linearGradient></defs>
    <ellipse cx={13} cy={14} rx={12.5} ry={13.5} fill={`url(#${id})`} />
    <path d="M25 17c-1-6-5-10-11-10-5 0-8 3-9 7 3-3 8-4 11-2 2 1 3 3 2 5-3 2-6 0-6 0 0 4 6 6 10 4 2-1 3-2 3-4z" fill="#7ad34e" opacity=".85" />
    <ellipse cx={16} cy={17} rx={4.5} ry={4} fill="#d3ebf0" />
  </svg>
);

export default function App() {
  return (
    <Page lang="zh-CN">
      <Global />
      <TopBar>
        <LogoBox><Logo /></LogoBox>
        <ExamTitle>一级计算机基础及<ExamLatin>MS Office</ExamLatin>应用</ExamTitle>
        <Phone>156299990001</Phone>
        <Candidate>考生1</Candidate>
        <TopRight>
          <TopIcon $ml={0} $w={16}><Chevrons /></TopIcon>
          <TopIcon $ml={31} $w={30}><WinIcon /></TopIcon>
          <TopIcon $ml={15} $w={22}><HelpMark>?</HelpMark></TopIcon>
          <Countdown>02:02</Countdown>
          <Submit>交卷</Submit>
        </TopRight>
      </TopBar>

      <ExamWindow>
        <WinTitle>
          <WyBall s={17} />
          <WinTitleText>一级计算机基础及MS Office应用</WinTitleText>
          <PinBox><Pin /></PinBox>
          <WinBtns>
            <WinBtn><svg width={12} height={7} viewBox="0 0 12 7"><rect x={.5} y={.5} width={11} height={6} rx={1} fill="#eef2f5" stroke="#667" /></svg></WinBtn>
            <WinBtn><svg width={10} height={10} viewBox="0 0 10 10"><rect x={.5} y={.5} width={9} height={9} fill="#eef2f5" stroke="#667" /><rect x={3} y={3} width={4} height={3} fill="#667" /></svg></WinBtn>
            <WinBtn><svg width={13} height={11} viewBox="0 0 13 11"><path d="M2 1l9 9M11 1l-9 9" stroke="#667" strokeWidth={2.6} /><path d="M2 1l9 9M11 1l-9 9" stroke="#eef2f5" strokeWidth={1} /></svg></WinBtn>
          </WinBtns>
        </WinTitle>
        <Band><ExcelLogo w={32} h={32} />电子表格</Band>
        <Tools>
          <ToolButton $w={72}><Wrench />工具箱</ToolButton>
          <ToolButton $w={87} $on><Folder />考生文件夹</ToolButton>
          <ToolButton $w={95} $end><DocBlue />查看原始素材</ToolButton>
        </Tools>
        <ContentRow>
          <Desc>
            <Badge>1</Badge>
            {lines.map((l, i) => <DescLine key={i} $indent={l.i}><Mixed text={l.t} /></DescLine>)}
          </Desc>
          <Side>
            <SideBtn><VideoIcon />在线视频</SideBtn>
            <SideBtn><VideoIcon />下载视频</SideBtn>
            <SideBtn><FileIcon />文字评析</SideBtn>
            <SideBtn><SearchIcon />查看答案</SideBtn>
          </Side>
        </ContentRow>
        <WinFoot />
      </ExamWindow>

      <Excel>
        <XlTitle>
          <Qat>
            <QSlot $w={22} $ml={18}>{Q.save}</QSlot>
            <QSlot $w={22} $ml={7}>{Q.open}</QSlot>
            <QSlot $w={22} $ml={6}>{Q.doc}</QSlot>
            <QSlot $w={22} $ml={4}>{Q.touch}</QSlot>
            <QSlot $w={10}><QCaret /></QSlot>
            <QSlot $w={22} $ml={6}>{Q.spell}</QSlot>
            <QSlot $w={22} $ml={7}>{Q.prev}</QSlot>
            <QSlot $w={22} $ml={7}>{Q.undo}</QSlot>
            <QSlot $w={10}><QCaret /></QSlot>
            <QSlot $w={22} $ml={4}>{Q.redo}</QSlot>
            <QSlot $w={10}><QCaret $dim /></QSlot>
            <QSlot $w={22} $ml={1}>{Q.cust}</QSlot>
            <XlName>Excel - Excel</XlName>
          </Qat>
          <ToolZone>图表工具</ToolZone>
          <WinCtl>
            <WinCtlSlot><svg width={14} height={12} viewBox="0 0 14 12"><path d="M1 1h12v10H1zM1 3h12M7 9V5M5 7l2-2 2 2" stroke="#fff" fill="none" /></svg></WinCtlSlot>
            <WinCtlSlot><svg width={11} height={2} viewBox="0 0 11 2"><path d="M0 1h11" stroke="#fff" /></svg></WinCtlSlot>
            <WinCtlSlot><svg width={11} height={11} viewBox="0 0 11 11"><rect x={.5} y={.5} width={10} height={10} stroke="#fff" fill="none" /></svg></WinCtlSlot>
            <WinCtlSlot><svg width={11} height={11} viewBox="0 0 11 11"><path d="M0 0l11 11M11 0L0 11" stroke="#fff" /></svg></WinCtlSlot>
          </WinCtl>
        </XlTitle>
        <XlTabs>
          {xlTabs.map(([t, tw, on]) => <XlTab key={t} $w={tw} $on={on}>{t}</XlTab>)}
          <ToolZone $tab>
            <XlTab $w={51}>设计</XlTab>
            <XlTab $w={53}>格式</XlTab>
          </ToolZone>
          <TellMe>
            <TellBar />
            <svg width={11} height={14} viewBox="0 0 11 14"><path d="M3 10C1 8 0 6 1 4c1-3 8-3 9 0 1 2 0 4-2 6zM4 12.5h3" stroke="#e6f2ea" fill="none" /></svg>
            告诉我您想要做什么...
          </TellMe>
          <Signin>登录</Signin>
          <Share>
            <svg width={15} height={14} viewBox="0 0 15 14"><circle cx={6} cy={4} r={3.2} stroke="#fff" fill="none" /><path d="M1 13c0-3 2-5 5-5M9 11h5M11.5 8.5v5" stroke="#fff" fill="none" /></svg>
            共享
          </Share>
        </XlTabs>

        <Ribbon>
          <Group $w={116}>
            <GroupBody $row>
              <BigBtn $w={36} $ml={9}>
                <BigIcon>{I.paste}</BigIcon>
                粘贴
                <BigCaret><Caret /></BigCaret>
              </BigBtn>
              <SmallCol $ml={3}>
                <SmallRow>{I.cut}剪切</SmallRow>
                <SmallRow>{I.copy}复制<Caret $ml={6} /></SmallRow>
                <SmallRow>{I.brush}格式刷</SmallRow>
              </SmallCol>
            </GroupBody>
            <GroupLabel $pr={16}>剪贴板</GroupLabel>
            <Launcher />
          </Group>

          <Group $w={250}>
            <GroupBody $pl={5}>
              <RowA>
                <Combo $w={157}>宋体 (正文)<Caret /></Combo>
                <Combo $w={38}>10<Caret /></Combo>
                <Slot $w={22}>{I.aUp}</Slot>
                <Slot $w={21}>{I.aDn}</Slot>
              </RowA>
              <RowB>
                <Slot $w={21}><Bold>B</Bold></Slot>
                <Slot $w={22}><Bold $kind="i">I</Bold></Slot>
                <Slot $w={22}><Bold $kind="u">U</Bold></Slot>
                <Slot $w={11}><Caret /></Slot>
                <Sep $w={12} />
                <Slot $w={19}>{I.border}</Slot>
                <Slot $w={13}><Caret $dim /></Slot>
                <Sep $w={10} />
                <Slot $w={21}>{I.fill}</Slot>
                <Slot $w={12}><Caret /></Slot>
                <Slot $w={23}>{I.fontA}</Slot>
                <Slot $w={11}><Caret /></Slot>
                <Sep $w={10} />
                <Slot $w={21}>{I.wen}</Slot>
                <Slot $w={10}><Caret $dim /></Slot>
              </RowB>
            </GroupBody>
            <GroupLabel $pr={16}>字体</GroupLabel>
            <Launcher />
          </Group>

          <Group $w={239}>
            <GroupBody $pl={5}>
              <RowA>
                <Slot $w={22}>{I.alignV(1)}</Slot>
                <Slot $w={22}>{I.alignV(4)}</Slot>
                <Slot $w={22}>{I.alignV(7)}</Slot>
                <Sep $w={10} />
                <Slot $w={20}>{I.orient}</Slot>
                <Slot $w={9}><Caret $dim /></Slot>
                <Slot $w={13} />
                <Sep $w={10} />
                <Slot $w={22}>{I.wrap}</Slot>
                <Slot $w={48} $dim>自动换行</Slot>
              </RowA>
              <RowB>
                <Slot $w={22}>{I.alignH(0)}</Slot>
                <Slot $w={22}>{I.alignH(1)}</Slot>
                <Slot $w={22}>{I.alignH(2)}</Slot>
                <Sep $w={10} />
                <Slot $w={22}>{I.indent(false)}</Slot>
                <Slot $w={22}>{I.indent(true)}</Slot>
                <Sep $w={8} />
                <Slot $w={22}>{I.merge}</Slot>
                <Slot $w={60} $dim>合并后居中</Slot>
                <Slot $w={22}><Caret $dim /></Slot>
              </RowB>
            </GroupBody>
            <GroupLabel $pr={16}>对齐方式</GroupLabel>
            <Launcher />
          </Group>

          <Group $w={140}>
            <GroupBody $pl={5}>
              <RowA>
                <Combo $w={131} $dim>常规<ComboEnd><Caret $dim /></ComboEnd></Combo>
              </RowA>
              <RowB>
                <Slot $w={22}>{I.money}</Slot>
                <Slot $w={11}><Caret $dim /></Slot>
                <Slot $w={25} $dim><SmallGlyph $size={16}>%</SmallGlyph></Slot>
                <Slot $w={17} $dim><SmallGlyph $size={15}>,</SmallGlyph></Slot>
                <Sep $w={6} />
                <Slot $w={27}>{I.dec(".0", ".00")}</Slot>
                <Slot $w={22}>{I.dec(".00", ".0")}</Slot>
              </RowB>
            </GroupBody>
            <GroupLabel $pr={16}>数字</GroupLabel>
            <Launcher />
          </Group>

          <Group $w={190}>
            <GroupBody $row>
              <BigBtn $w={60} $ml={1} $dim><BigIcon>{I.cond}</BigIcon>条件格式<BigCaret><Caret $dim /></BigCaret></BigBtn>
              <BigBtn $w={44} $ml={1} $dim><BigIcon>{I.table}</BigIcon>套用<span>表格格式<Caret $dim $ml={2} /></span></BigBtn>
              <BigBtn $w={78} $ml={7} $dim><BigIcon>{I.cellS}</BigIcon>单元格样式<BigCaret><Caret $dim /></BigCaret></BigBtn>
            </GroupBody>
            <GroupLabel>样式</GroupLabel>
          </Group>

          <Group $w={134}>
            <GroupBody $row>
              <BigBtn $w={40} $ml={4}><BigIcon>{I.insert}</BigIcon>插入<BigCaret><Caret /></BigCaret></BigBtn>
              <BigBtn $w={42} $ml={2}><BigIcon>{I.del}</BigIcon>删除<BigCaret><Caret /></BigCaret></BigBtn>
              <BigBtn $w={42}><BigIcon>{I.format}</BigIcon>格式<BigCaret><Caret /></BigCaret></BigBtn>
            </GroupBody>
            <GroupLabel>单元格</GroupLabel>
          </Group>

          <Group $w={229}>
            <GroupBody $row $pl={8}>
              <SmallCol>
                <SmallRow $w={88} $dim $gap={4}>{I.sigma}自动求和<Caret $dim $ml={4} /></SmallRow>
                <SmallRow $w={88} $dim $gap={4}>{I.fillDn}填充<Caret $dim /></SmallRow>
                <SmallRow $w={88} $gap={4}>{I.eraser}清除<Caret /></SmallRow>
              </SmallCol>
              <BigBtn $w={60} $ml={1} $dim><BigIcon>{I.sort}</BigIcon>排序和筛选<BigCaret><Caret $dim /></BigCaret></BigBtn>
              <BigBtn $w={60} $ml={5}><BigIcon>{I.find}</BigIcon>查找和选择<BigCaret><Caret /></BigCaret></BigBtn>
            </GroupBody>
            <GroupLabel>编辑</GroupLabel>
          </Group>

          <Group $w={55}>
            <GroupBody $row>
              <BigBtn $w={55}><BigIcon>{I.invoice}</BigIcon>发票<span>查验</span></BigBtn>
            </GroupBody>
            <GroupLabel>发票查验</GroupLabel>
          </Group>
          <CollapseSlot><svg width={9} height={6} viewBox="0 0 9 6"><path d="M1 5l3.5-3.5L8 5" stroke="#555" strokeWidth={1.6} fill="none" /></svg></CollapseSlot>
        </Ribbon>

        <FormulaBar>
          <NameBox>图表 1<Caret /></NameBox>
          <Dots>⋮</Dots>
          <FxBox>
            <svg width={11} height={11} viewBox="0 0 11 11"><path d="M1 1l9 9M10 1l-9 9" stroke="#c4c4c4" strokeWidth={1.6} /></svg>
            <svg width={13} height={11} viewBox="0 0 13 11"><path d="M1 6l4 4 7-9" stroke="#c4c4c4" strokeWidth={1.8} fill="none" /></svg>
            <Fx>fx</Fx>
          </FxBox>
          <FormulaInput><svg width={8} height={5} viewBox="0 0 8 5"><path d="M1 4l3-3 3 3" stroke="#666" fill="none" /></svg></FormulaInput>
        </FormulaBar>

        <SheetRow>
          <SheetWrap>
            <Grid>
              <Corner><svg width={10} height={10} viewBox="0 0 10 10"><path d="M10 0v10H0z" fill="#c4c4c4" /></svg></Corner>
              {columns.map((c, i) => <ColHead key={i}>{c}</ColHead>)}
              {sheet.map((row, ri) => (
                <React.Fragment key={ri}>
                  <RowHead $black={ri > 0}>{ri + 1}</RowHead>
                  {row.map((c, ci) => (
                    <Cell key={ci} $span={c.span} $align={c.align} $rb={c.rb} $bb={c.bb} $tint={c.tint} $mono={c.mono} $pr={c.pr}>{c.t}</Cell>
                  ))}
                </React.Fragment>
              ))}
            </Grid>
            <SelLeftless $x={30} $y={55} $w={101} $h={150} $c="#7d6398" />
            <SelBox $x={721} $y={35} $w={134} $h={20} $c="#a84a5c" />
            <SelDot $x={129} $y={53} $c="#7d6398" />
            <SelDot $x={29} $y={53} $c="#7d6398" />
            <SelDot $x={719} $y={33} $c="#943a4c" />
            <SelDot $x={852} $y={33} $c="#943a4c" />
            <Chart>
              <ChartTitle>销售提成（万元）</ChartTitle>
              <svg width={479} height={110} viewBox="0 0 479 110">
                {gridYs.map(g => (
                  <React.Fragment key={g.l}>
                    <path d={`M34 ${g.y + .5}H463`} stroke="#dcdcdc" />
                    <text x={22} y={g.y + 4} fontSize={11} textAnchor="end" fill="#606060" fontFamily="Liberation Sans">{g.l}</text>
                  </React.Fragment>
                ))}
                {bars.map(x => <rect key={x} x={x - 1} y={39} width={14} height={71} fill="#4d7db9" />)}
              </svg>
            </Chart>
            <Handle $x={448} $y={52} />
            <Handle $x={688} $y={52} />
            <Handle $x={928} $y={52} />
            <Handle $x={448} $y={196} />
            <Handle $x={928} $y={196} />
            <ChartTools>
              <ChartTool><svg width={15} height={15} viewBox="0 0 15 15"><path d="M7.5 1v13M1 7.5h13" stroke="#6ea892" strokeWidth={4} /></svg></ChartTool>
              <ChartTool><svg width={20} height={20} viewBox="0 0 20 20"><path d="M12 10l6-8-2 8-3 3z" fill="#8a8a8a" /><path d="M2 18c2-5 5-8 9-8l2 3c-3 4-7 5-11 5z" fill="#5a84b5" /></svg></ChartTool>
              <ChartTool><svg width={18} height={18} viewBox="0 0 18 18"><path d="M0 1h18l-7 8v8H7V9z" fill="#8c8c8c" /></svg></ChartTool>
            </ChartTools>
          </SheetWrap>
          <VScroll>
            <VBtn><Caret $dim /></VBtn>
            <VThumb />
            <VSpace />
            <VBtn><Caret /></VBtn>
          </VScroll>
        </SheetRow>

        <TabBar>
          <TabNav>
            <svg width={5} height={8} viewBox="0 0 5 8"><path d="M5 0v8L0 4z" fill="#c4c4c4" /></svg>
            <svg width={5} height={8} viewBox="0 0 5 8"><path d="M0 0v8l5-4z" fill="#c4c4c4" /></svg>
          </TabNav>
          <SheetTab $w={70} $on>Sheet1</SheetTab>
          <SheetTab $w={114}>图书销售统计表</SheetTab>
          <SheetTab $w={68}>Sheet3</SheetTab>
          <PlusSlot>
            <svg width={16} height={16} viewBox="0 0 16 16"><circle cx={8} cy={8} r={7.2} stroke="#777" fill="none" /><path d="M8 4v8M4 8h8" stroke="#777" strokeWidth={1.6} /></svg>
          </PlusSlot>
          <TabSpacer />
          <TabDots>⋮</TabDots>
          <HScroll>
            <HBtn><svg width={4} height={7} viewBox="0 0 4 7"><path d="M4 0v7L0 3.5z" fill="#555" /></svg></HBtn>
            <HThumb />
            <HTrack />
            <HBtn><svg width={4} height={7} viewBox="0 0 4 7"><path d="M0 0v7l4-3.5z" fill="#555" /></svg></HBtn>
          </HScroll>
        </TabBar>

        <Status>
          <StatusLeft>
            <span>就绪</span>
            <span>数字</span>
            <svg width={13} height={13} viewBox="0 0 13 13"><circle cx={3} cy={3} r={2.6} fill="#777" /><path d="M1 6h11v6H1zM1 9h11M4 6v6M8 6v6" stroke="#777" fill="none" strokeDasharray="1 1" /></svg>
          </StatusLeft>
          <StatusItem $w={67}>平均值: 1</StatusItem>
          <StatusItem $w={61}>计数: 40</StatusItem>
          <StatusItem $w={84}>数值计数: 40</StatusItem>
          <StatusItem $w={66}>最小值: 1</StatusItem>
          <StatusItem $w={67}>最大值: 1</StatusItem>
          <StatusItem $w={63}>求和: 40</StatusItem>
          <GridView><svg width={13} height={13} viewBox="0 0 13 13"><path d="M.5.5h12v12H.5zM4.5.5v12M8.5.5v12M.5 4.5h12M.5 8.5h12" stroke="#6f6f6f" fill="none" /></svg></GridView>
          <Slider />
          <PlusMark>+</PlusMark>
          <Zoom>100%</Zoom>
        </Status>
      </Excel>

      <Taskbar>
        <TaskSlot>
          <svg width={24} height={24} viewBox="0 0 24 24">
            <rect width={11.5} height={11.5} fill="#36b0e6" /><rect x={12.5} width={11.5} height={11.5} fill="#2aa0de" />
            <rect y={12.5} width={11.5} height={11.5} fill="#1d8fd8" /><rect x={12.5} y={12.5} width={11.5} height={11.5} fill="#1478c8" />
          </svg>
        </TaskSlot>
        <TaskSlot><Edge id="e1" /></TaskSlot>
        <TaskSlot>
          <svg width={24} height={26} viewBox="0 0 24 26">
            <path d="M7 6V3c0-3 10-3 10 0v3" stroke="#1f7fb8" strokeWidth={2} fill="none" />
            <path d="M1 6h22v17c0 2-1 3-3 3H4c-2 0-3-1-3-3z" fill="#173f72" />
            <rect x={7} y={11} width={4.5} height={4.5} fill="#e5502a" /><rect x={12.5} y={11} width={4.5} height={4.5} fill="#6ab42c" />
            <rect x={7} y={16.5} width={4.5} height={4.5} fill="#1fa0e4" /><rect x={12.5} y={16.5} width={4.5} height={4.5} fill="#f6b90a" />
          </svg>
        </TaskSlot>
        <TaskSlot>
          <svg width={25} height={22} viewBox="0 0 25 22">
            <path d="M12.5 0l12 8v14H.5V8z" fill="#1878c4" /><path d="M.5 8v14h24V8l-12 9z" fill="#43b3ee" /><path d="M6 6h13v6l-6.5 5L6 12z" fill="#dff3fc" />
          </svg>
        </TaskSlot>
        <TaskSlot $open><Edge id="e2" /></TaskSlot>
        <TaskSlot $open>
          <svg width={26} height={26} viewBox="0 0 26 26">
            <path d="M1 2h9l3 3h12v20H1z" fill="#e6b33a" /><path d="M1 7h24v18H1z" fill="#fbd14f" /><rect x={6} y={17} width={14} height={8} fill="#1d8fd0" />
          </svg>
        </TaskSlot>
        <TaskSlot $open><WyBall s={25} /></TaskSlot>
        <TaskSlot $on $open><ExcelLogo w={24} h={24} /></TaskSlot>
        <Tray>
          <TrayItem $w={20}><svg width={12} height={7} viewBox="0 0 12 7"><path d="M1 6l5-5 5 5" stroke="#333" strokeWidth={1.2} fill="none" /></svg></TrayItem>
          <TrayItem $w={20} $ml={8}><svg width={12} height={20} viewBox="0 0 12 20"><rect x={3.5} y={.5} width={5} height={12} rx={2.5} stroke="#6d7d85" fill="none" /><path d="M1 9c0 7 10 7 10 0M6 15v4" stroke="#6d7d85" fill="none" /></svg></TrayItem>
          <TrayItem $w={20} $ml={12}><TrayChar>中</TrayChar></TrayItem>
          <TrayItem $w={20} $ml={18}>
            <svg width={16} height={18} viewBox="0 0 16 18"><path d="M1 3l14-3v15L1 18z" fill="#3fae2a" /><path d="M12 6c-2-2-7-1-7 1s6 2 6 4-5 3-7 1" stroke="#fff" strokeWidth={2} fill="none" /></svg>
          </TrayItem>
          <TrayItem $w={20} $ml={18}>
            <svg width={17} height={17} viewBox="0 0 17 17"><circle cx={8} cy={8} r={7} stroke="#333" fill="none" /><path d="M1 6h14M1 11h14M8 1c-4 4-4 10 0 14M8 1c4 4 4 10 0 14" stroke="#333" fill="none" strokeWidth={.8} /><circle cx={12} cy={12} r={4} fill="#cbe5ea" stroke="#333" /><path d="M9.5 14.5l5-5" stroke="#333" /></svg>
          </TrayItem>
          <TrayItem $w={20} $ml={4}>
            <svg width={15} height={14} viewBox="0 0 15 14"><path d="M1 5v4h2l4 4V1L3 5zM10 4c1.4 1.6 1.4 4.4 0 6M12.5 2c2.4 3 2.4 7 0 10" stroke="#333" fill="none" /></svg>
          </TrayItem>
          <Clock>10:39<br />2023-04-25</Clock>
          <Notif>3</Notif>
        </Tray>
      </Taskbar>

      <Ime>
        <ImeS>
          <svg width={28} height={27} viewBox="0 0 28 27"><path d="M2 6L26 0l2 20-24 7z" fill="#3fae2a" /><path d="M21 8c-3-3-12-2-12 2s10 3 10 7-8 5-12 2" stroke="#fff" strokeWidth={3.2} fill="none" /></svg>
        </ImeS>
        <ImeGlyph>五</ImeGlyph>
        <svg width={14} height={14} viewBox="0 0 14 14"><path d="M10 0c2 5-1 10-8 10 3 4 11 3 11-4 0-3-1-5-3-6z" fill="#222" /></svg>
        <svg width={13} height={14} viewBox="0 0 13 14"><circle cx={3} cy={3} r={1.6} stroke="#222" fill="none" /><path d="M10 6c2 0 2 3 0 5" stroke="#222" strokeWidth={2} fill="none" /></svg>
        <svg width={16} height={14} viewBox="0 0 16 14"><rect x={.5} y={.5} width={15} height={13} rx={2} fill="#222" /><path d="M3 4h10M3 7h10" stroke="#fff" strokeDasharray="1.5 1" /><path d="M4 10h8" stroke="#fff" /></svg>
        <svg width={14} height={16} viewBox="0 0 14 16"><circle cx={7} cy={3.5} r={3.5} fill="#222" /><path d="M1 16V9c0-2 12-2 12 0v7zM7 7v9" fill="#222" stroke="#fff" strokeWidth={.6} /></svg>
        <svg width={15} height={15} viewBox="0 0 15 15"><circle cx={3.5} cy={3.5} r={3.4} fill="#222" /><circle cx={11.5} cy={3.5} r={3.4} fill="#222" /><circle cx={3.5} cy={11.5} r={3.4} fill="#222" /><circle cx={11.5} cy={11.5} r={3.4} fill="#222" /></svg>
      </Ime>
      <Watermark><span>黄辉</span><span>制作</span></Watermark>
      <Cursor><svg width={13} height={20} viewBox="0 0 13 20"><path d="M1 1v15l4-3 2.5 6 2.5-1-2.5-6H12z" fill="#fff" stroke="#111" /></svg></Cursor>
    </Page>
  );
}
